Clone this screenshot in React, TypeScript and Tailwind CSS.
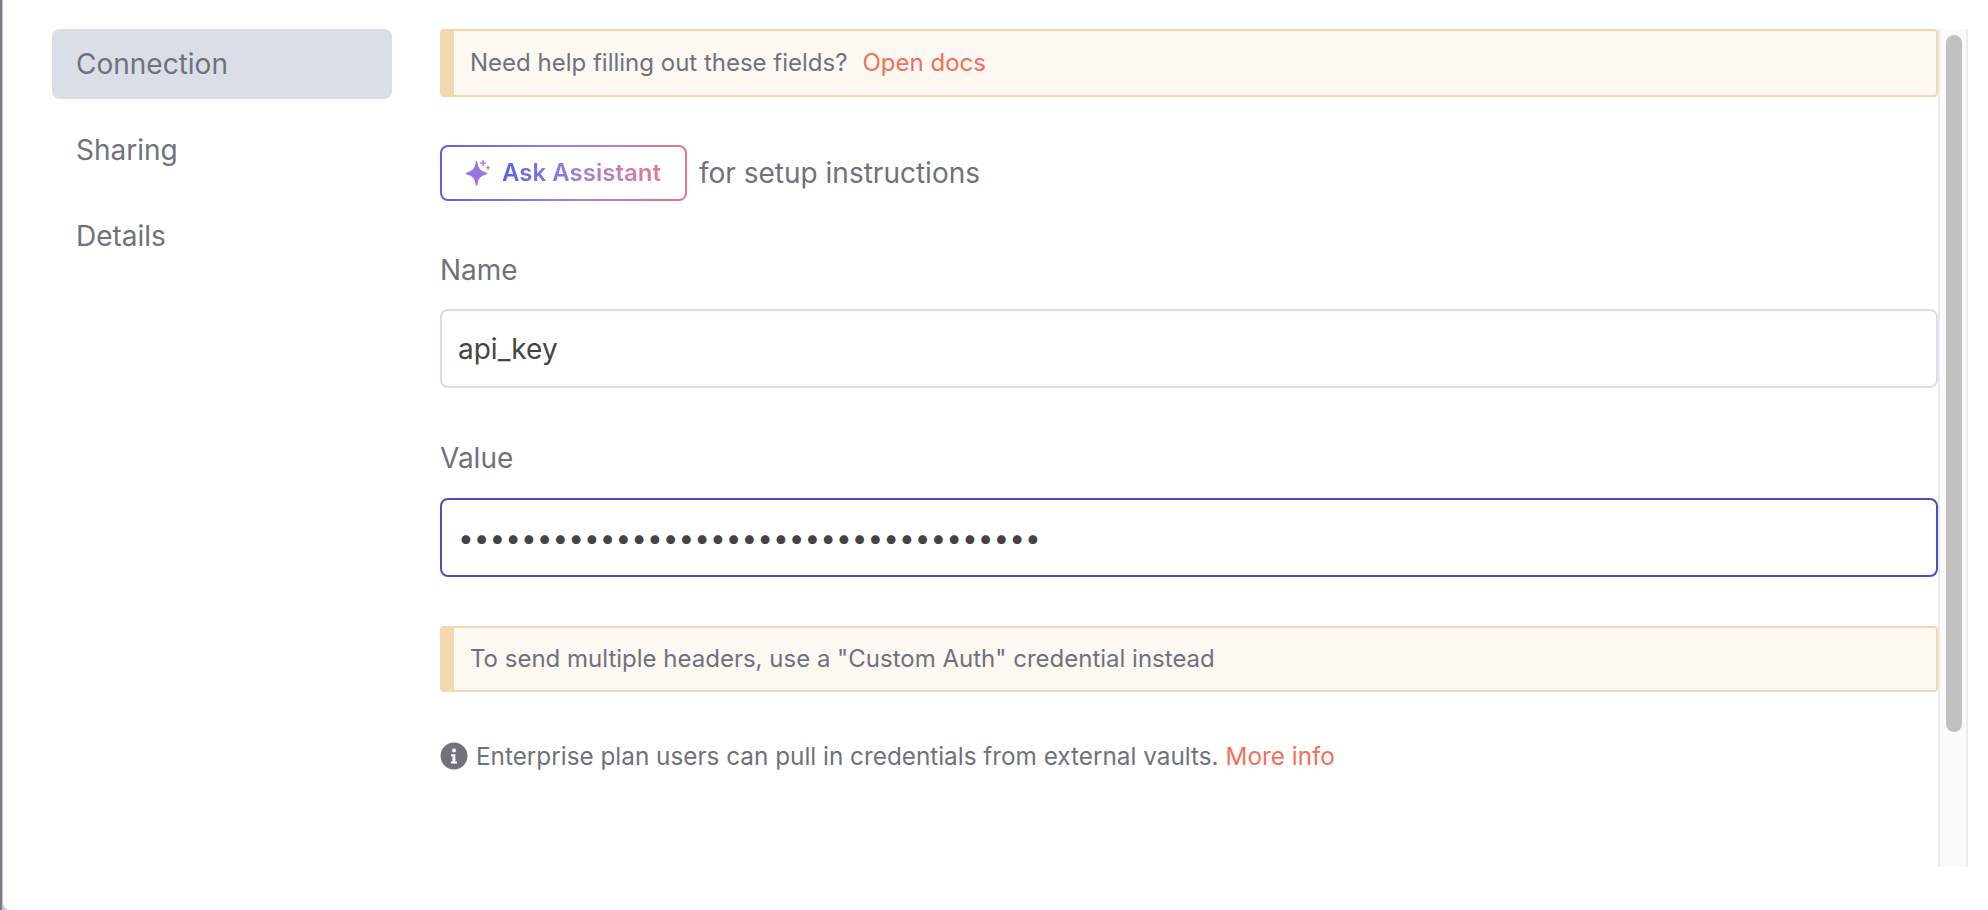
const navItems = ['Connection', 'Sharing', 'Details'];

function Notice({ children, height }: { children: React.ReactNode; height: string }) {
  return (
    <div className={`${height} flex items-center rounded-[4px] border-2 border-l-[14px] border-[#f2d8ae] bg-[#fdf8f2] pl-[16px] text-[24px] text-[#6f727c]`}>
      {children}
    </div>
  );
}

function SparkleIcon() {
  return (
    <svg width="24" height="26" viewBox="0 0 24 26" fill="#9676e0">
      <path d="M10.5 2 C11.2 8.6 13.4 11.8 20.5 13.5 C13.4 15.2 11.2 18.4 10.5 25 C9.8 18.4 7.6 15.2 0.5 13.5 C7.6 11.8 9.8 8.6 10.5 2 Z" stroke="#9676e0" strokeWidth="1.6" strokeLinejoin="round" />
      <path d="M16.4 0h1.3v2.4h2.4v1.3h-2.4v2.4h-1.3V3.7H14V2.4h2.4Z" />
      <path d="M21.5 5.5h1v1.8h1.5v1h-1.5v1.8h-1V8.3H20v-1h1.5Z" />
    </svg>
  );
}

function InfoIcon() {
  return (
    <svg width="28" height="28" viewBox="0 0 28 28">
      <circle cx="14" cy="14" r="13.5" fill="#6f727c" />
      <circle cx="14" cy="8.6" r="2" fill="#fff" />
      <path d="M11 12.2h4.4v7.2h1.6v2.1h-6v-2.1h1.5v-5.1H11Z" fill="#fff" />
    </svg>
  );
}

export default function App() {
  return (
    <div className="relative h-[910px] w-[1988px] overflow-hidden bg-[#c4c4ce] pl-[3px]">
      <div className="absolute left-0 top-0 h-full w-[2px] bg-[#7b7b8d]" />
      <div className="flex h-full rounded-bl-[7px] bg-white pl-[49px] pr-[20px] pt-[29px] font-['Inter',sans-serif]">
        <nav className="flex w-[340px] shrink-0 flex-col gap-[16px]">
          {navItems.map((item, i) => (
            <div
              key={item}
              className={`flex h-[70px] items-center rounded-[8px] pl-[24px] text-[28px] text-[#6f727c] ${i === 0 ? 'bg-[#dadee7]' : ''}`}
            >
              {item}
            </div>
          ))}
        </nav>

        <main className="ml-[48px] flex h-[838px] flex-1">
          <div className="w-[1498px] shrink-0">
            <Notice height="h-[68px]">
              <span>Need help filling out these fields?</span>
              <a className="ml-[15px] text-[#f2705a]">Open docs</a>
            </Notice>

            <div className="mt-[48px] flex items-center gap-[12px]">
              <button className="h-[56px] w-[247px] rounded-[8px] bg-gradient-to-r from-[#5b60e8] via-[#a07fe0] to-[#e2788e] p-[2px]">
                <span className="flex h-full w-full items-center justify-center gap-[12px] rounded-[6px] bg-white">
                  <SparkleIcon />
                  <span className="bg-gradient-to-r from-[#5b60e8] via-[#a07fe0] to-[#e2788e] bg-clip-text text-[24px] font-semibold text-transparent">
                    Ask Assistant
                  </span>
                </span>
              </button>
              <span className="text-[28px] text-[#6f727c]">for setup instructions</span>
            </div>

            <label className="mt-[52px] block text-[28px] leading-[34px] text-[#6f727c]">Name</label>
            <input
              readOnly
              value="api_key"
              className="mt-[22px] block h-[79px] w-full rounded-[8px] border-2 border-[#dadde8] bg-white px-[16px] text-[28px] text-[#444444] outline-none"
            />

            <label className="mt-[53px] block text-[28px] leading-[34px] text-[#6f727c]">Value</label>
            <input
              readOnly
              type="password"
              value="abcdefghijklmnopqrstuvwxyz01234567890"
              className="mt-[23px] block h-[79px] w-full rounded-[8px] border-2 border-[#4f4fb8] bg-white px-[16px] text-[28px] text-[#444444] outline-none"
            />

            <div className="mt-[49px]">
              <Notice height="h-[66px]">
                <span>To send multiple headers, use a "Custom Auth" credential instead</span>
              </Notice>
            </div>

            <div className="mt-[46px] flex items-center text-[24.3px] text-[#6f727c]">
              <InfoIcon />
              <span className="ml-[8px]">Enterprise plan users can pull in credentials from external vaults.</span>
              <a className="ml-[7px] text-[#f2705a]">More info</a>
            </div>
          </div>

          <div className="h-full w-[30px] shrink-0 border-x-2 border-x-[#ebebeb] bg-[#fafafa] pl-[6px] pt-[6px]">
            <div className="h-[697px] w-[16px] rounded-full bg-[#c1c1c1]" />
          </div>
        </main>
      </div>
    </div>
  );
}
